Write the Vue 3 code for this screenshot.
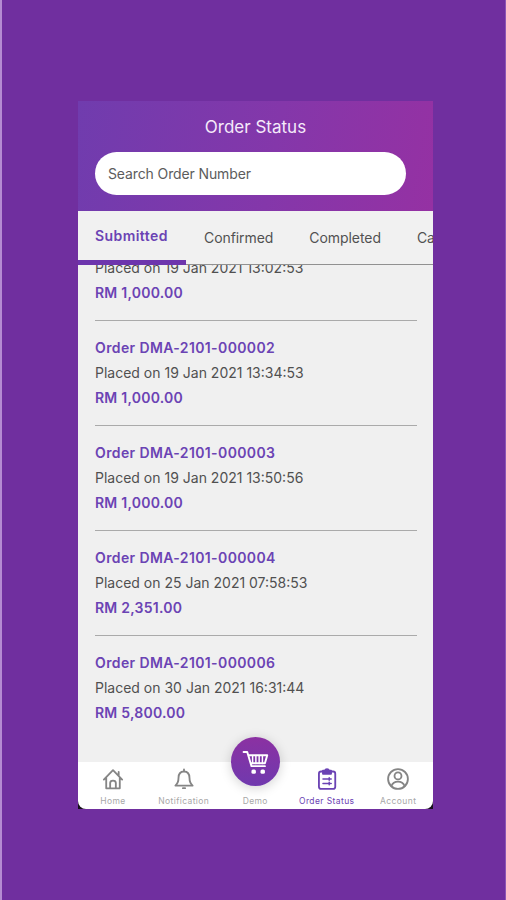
<script setup>
const tabs = ['Submitted', 'Confirmed', 'Completed', 'Cancelled']
const orders = [
  { id: 'DMA-2101-000001', date: '19 Jan 2021 13:02:53', total: '1,000.00' },
  { id: 'DMA-2101-000002', date: '19 Jan 2021 13:34:53', total: '1,000.00' },
  { id: 'DMA-2101-000003', date: '19 Jan 2021 13:50:56', total: '1,000.00' },
  { id: 'DMA-2101-000004', date: '25 Jan 2021 07:58:53', total: '2,351.00' },
  { id: 'DMA-2101-000006', date: '30 Jan 2021 16:31:44', total: '5,800.00' },
]
</script>

<template>
  <div class="page">
    <div class="phone">
      <header class="header">
        <h1 class="title">Order Status</h1>
        <div class="search">Search Order Number</div>
      </header>
      <nav class="tabs">
        <div v-for="(t, i) in tabs" :key="t" class="tab" :class="{ active: i === 0 }"><span>{{ t }}</span></div>
      </nav>
      <main class="list">
        <article v-for="o in orders" :key="o.id" class="order">
          <div class="line strong id">Order {{ o.id }}</div>
          <div class="line date">Placed on {{ o.date }}</div>
          <div class="line strong total">RM {{ o.total }}</div>
        </article>
      </main>
      <footer class="bar">
        <div class="item">
          <svg class="icon" viewBox="0 0 24 24">
            <path d="M2 12.6 12 2.4l10 10.2M4.6 10.4v11.8h14.8V10.4M18.2 8.2V4.4M8.9 22v-5.6c0-3.6 6.2-3.6 6.2 0V22" />
          </svg>
          <span class="label">Home</span>
        </div>
        <div class="item">
          <svg class="icon" viewBox="0 0 24 24">
            <path d="M12 1.6v2M2.6 19.2c2.6-2.2 3.4-4.8 3.4-8.2 0-4.6 2.4-7.2 6-7.2s6 2.6 6 7.2c0 3.4.8 6 3.4 8.2z" />
            <path d="M10.8 22h2.4" />
          </svg>
          <span class="label">Notification</span>
        </div>
        <div class="item">
          <div class="cart">
            <svg class="cart-icon" viewBox="0 0 28 26">
              <path d="M1.6 2h3.8l4.4 14.8h14M6.4 5.4h19.8L23.8 13.8H9" />
              <path class="thin" d="M11 6v8M14.4 6v8M17.8 6v8M21.2 6v8" />
              <rect x="9.8" y="20.2" width="4.6" height="4.6" rx="1.6" />
              <rect x="19.2" y="20.2" width="4.6" height="4.6" rx="1.6" />
            </svg>
          </div>
          <span class="label">Demo</span>
        </div>
        <div class="item current">
          <svg class="icon" viewBox="0 0 24 24">
            <rect x="3.2" y="3.8" width="17.8" height="19" rx="2.4" />
            <path class="solid" d="M7.6 3h2a2.6 2.6 0 0 1 4.8 0h2v3.4H7.6z" />
            <path class="rows" d="M7.6 12h9M7.6 16.8h9" />
            <path class="rows" d="M14.4 10.6v2.8M14.4 15.4v2.8" />
          </svg>
          <span class="label">Order Status</span>
        </div>
        <div class="item">
          <svg class="icon" viewBox="0 0 24 24">
            <circle cx="12" cy="12" r="10.8" />
            <circle cx="12" cy="8.6" r="3.8" />
            <path d="M4.8 19.6c2.4-6.4 12-6.4 14.4 0" />
          </svg>
          <span class="label">Account</span>
        </div>
      </footer>
    </div>
  </div>
</template>

<style>
body { margin: 0; }
</style>

<style scoped>
.page {
  box-sizing: border-box;
  width: 506px;
  height: 900px;
  padding: 101px 0 0 76px;
  border-left: 2px solid #b58bd2;
  border-right: 1px solid #8c55b4;
  background: #702f9f;
  font-family: Inter, "Liberation Sans", sans-serif;
  overflow: hidden;
}
.phone {
  display: flex;
  flex-direction: column;
  width: 355px;
  height: 708px;
  background: linear-gradient(#f0f0f0 96%, #17101c 96%);
  overflow: hidden;
}
.header {
  flex: none;
  height: 110px;
  background: linear-gradient(100deg, #703cae 0%, #8437aa 55%, #9531a3 100%);
}
.title {
  box-sizing: border-box;
  height: 51px;
  margin: 0;
  padding-top: 14px;
  line-height: 24px;
  font-size: 17px;
  font-weight: 400;
  color: #f5eafa;
  text-align: center;
}
.search {
  width: 298px;
  height: 43px;
  margin-left: 17px;
  padding-left: 13px;
  border-radius: 22px;
  background: #fff;
  line-height: 44px;
  font-size: 14px;
  letter-spacing: -0.12px;
  color: #5c5c5c;
}
.tabs {
  flex: none;
  box-sizing: border-box;
  display: flex;
  height: 54px;
  border-bottom: 1px solid #919191;
  background: #f1f1f1;
}
.tab {
  box-sizing: border-box;
  flex: none;
  height: 54px;
  padding: 0 18px;
  line-height: 54px;
  font-size: 14px;
  letter-spacing: -0.07px;
  color: #515151;
}
.tab.active {
  width: 108px;
  padding-left: 17px;
  border-bottom: 5px solid #6d35ad;
  line-height: 49px;
  font-weight: 600;
  letter-spacing: 0.42px;
  color: #6b43b4;
}
.list {
  flex: 1;
  display: flex;
  flex-direction: column;
  justify-content: flex-end;
  min-height: 0;
  padding: 0 16px 36px 17px;
  overflow: hidden;
}
.order {
  box-sizing: border-box;
  flex: none;
  height: 105px;
  padding-top: 14px;
  border-bottom: 1px solid #aaa;
}
.order:last-child {
  height: 90px;
  border-bottom: 0;
}
.line {
  height: 25px;
  line-height: 25px;
  font-size: 14px;
  color: #505050;
  white-space: nowrap;
}
.line.strong {
  font-weight: 600;
  letter-spacing: 0.38px;
  color: #6b43b4;
}
.line.total { letter-spacing: 0.23px; }
.bar {
  flex: none;
  display: flex;
  height: 47px;
  background: #fff;
  border-radius: 0 0 8px 8px;
}
.item {
  flex: none;
  width: 71.5px;
  display: flex;
  flex-direction: column;
  align-items: center;
  color: #858585;
}
.item:first-child { width: 70px; }
.icon {
  width: 22px;
  height: 22px;
  margin-top: 6px;
  fill: none;
  stroke: currentColor;
  stroke-width: 2;
  stroke-linejoin: round;
  stroke-linecap: round;
}
.solid { fill: currentColor; }
.rows { stroke-width: 1.6; }
.label {
  margin-top: 6px;
  line-height: 10px;
  font-size: 8.5px;
  letter-spacing: 0.4px;
  color: #a8a8a8;
  white-space: nowrap;
}
.current, .current .label { color: #6b43b4; }
.cart {
  display: flex;
  align-items: center;
  justify-content: center;
  flex: none;
  width: 49px;
  height: 49px;
  margin-top: -25px;
  border-radius: 50%;
  background: linear-gradient(#8b31a2, #7039ae);
  box-shadow: 0 2px 12px rgba(0, 0, 0, 0.18);
}
.cart + .label { margin-top: 10px; }
.cart-icon {
  width: 27px;
  height: 25px;
  margin-top: 2px;
  fill: #fff;
  stroke: #fff;
  stroke-width: 2;
  stroke-linejoin: round;
  stroke-linecap: round;
}
.cart-icon path { fill: none; }
.cart-icon .thin { stroke-width: 1.5; }
.cart-icon rect { stroke: none; }
</style>
